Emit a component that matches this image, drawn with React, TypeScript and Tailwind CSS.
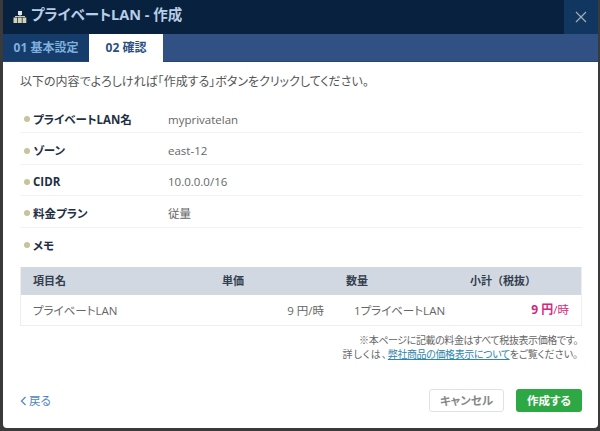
const rows = [
  { label: 'プライベートLAN名', value: 'myprivatelan' },
  { label: 'ゾーン', value: 'east-12' },
  { label: 'CIDR', value: '10.0.0.0/16' },
  { label: '料金プラン', value: '従量' },
  { label: 'メモ', value: '' },
];

function NetworkIcon() {
  return (
    <svg width="14" height="14" viewBox="0 0 14 14">
      <rect x="5" y="1" width="4" height="4" fill="#e4e6e2" />
      <rect x="6.5" y="5" width="1" height="1.5" fill="#c6cbc0" />
      <rect x="2" y="6" width="10" height="1" fill="#c6cbc0" />
      <rect x="0.5" y="7.5" width="3.8" height="5.5" fill="#d3d3b4" />
      <rect x="5" y="7.5" width="3.8" height="5.5" fill="#d3d3b4" />
      <rect x="9.5" y="7.5" width="3.8" height="5.5" fill="#d3d3b4" />
    </svg>
  );
}

export default function App() {
  return (
    <div className="w-[600px] h-[431px] overflow-hidden bg-[#3a3a3a] pl-[3px] pr-[2px] font-['Open_Sans','Noto_Sans_CJK_JP',sans-serif] text-[11.5px] [font-feature-settings:'palt']">
      <div className="h-[428px] bg-white rounded-b-[4px] flex flex-col">
        <div className="h-[34px] flex items-center justify-between bg-[#07213e]">
          <div className="flex items-center gap-[4px] pl-[10px] text-[14.5px] font-bold text-[#b8cde6]">
            <NetworkIcon />
            <span className="pb-[4px]">プライベートLAN - 作成</span>
          </div>
          <div className="w-[34px] h-[34px] flex items-center justify-center bg-[#113761]">
            <svg width="12" height="12" viewBox="0 0 12 12" stroke="#a3adb9" strokeWidth="1.2">
              <path d="M1 1l10 10M11 1L1 11" />
            </svg>
          </div>
        </div>

        <div className="h-[28px] flex bg-[#315083] border-b border-[#2a4470]">
          <div className="w-[86px] flex items-center justify-center bg-[#153c6b] text-[12px] text-[#7fb0dc] font-bold">01 基本設定</div>
          <div className="w-[74px] h-[28px] flex items-center justify-center bg-white text-[12px] text-[#2b4f80] font-bold">02 確認</div>
        </div>

        <div className="flex-1 flex flex-col pl-[17px] pr-[16px]">
          <p className="mt-[11px] leading-[18px] text-[12px] text-[#555]">以下の内容でよろしければ「作成する」ボタンをクリックしてください。</p>

          <div className="mt-[11px]">
            {rows.map((row, i) => (
              <div key={row.label} className={`h-[31.4px] pt-[4px] flex items-center ${i < 4 ? 'border-b border-[#f0f2f6]' : ''}`}>
                <div className="w-[148px] flex items-center gap-[3px] pl-[4px] font-bold text-[#1f2f45]">
                  <span className="w-[6px] h-[6px] rounded-full bg-[#c9c39a]" />
                  <span>{row.label}</span>
                </div>
                <div className="text-[#666]">{row.value}</div>
              </div>
            ))}
          </div>

          <div className="mt-[8px] border border-[#eeeeee] border-t-0">
            <div className="h-[28px] flex items-center bg-[#d2d8e1] text-[11px] font-bold text-[#333f4f] [font-feature-settings:normal]">
              <div className="w-[201px] pl-[12px]">項目名</div>
              <div className="w-[124px]">単価</div>
              <div className="w-[124px]">数量</div>
              <div>小計（税抜）</div>
            </div>
            <div className="h-[30px] pt-[1px] flex items-center text-[#666]">
              <div className="w-[202px] pl-[12px]">プライベートLAN</div>
              <div className="w-[101px] text-right">9 円/時</div>
              <div className="w-[130px] pl-[30px]">1プライベートLAN</div>
              <div className="w-[115px] text-right text-[#d6277c]"><span className="font-bold text-[12px]">9 円</span>/時</div>
            </div>
          </div>

          <div className="mt-[7px] text-right text-[10px] leading-[14px] text-[#666] pr-[4px]">
            <p className="tracking-[-0.4px]">※本ページに記載の料金はすべて税抜表示価格です。</p>
            <p>
              <span className="tracking-[1px]">詳しくは、</span>
              <a className="text-[#2e86ab] underline tracking-[-0.4px]">弊社商品の価格表示について</a>
              をご覧ください。
            </p>
          </div>

          <div className="mt-auto mb-[16px] flex items-center justify-between">
            <a className="flex items-center gap-[2px] text-[#4f86c0]">
              <svg width="7" height="10" viewBox="0 0 7 10" fill="none" stroke="#4f86c0" strokeWidth="1.2"><path d="M5.5 1L1.5 5l4 4" /></svg>
              戻る
            </a>
            <div className="flex gap-[12px]">
              <button className="w-[75px] h-[23px] rounded-[3px] border border-[#e2e2e2] bg-white text-[#888] font-bold">キャンセル</button>
              <button className="w-[66px] h-[23px] rounded-[3px] bg-[#2ea844] text-white font-bold">作成する</button>
            </div>
          </div>
        </div>
      </div>
    </div>
  );
}
